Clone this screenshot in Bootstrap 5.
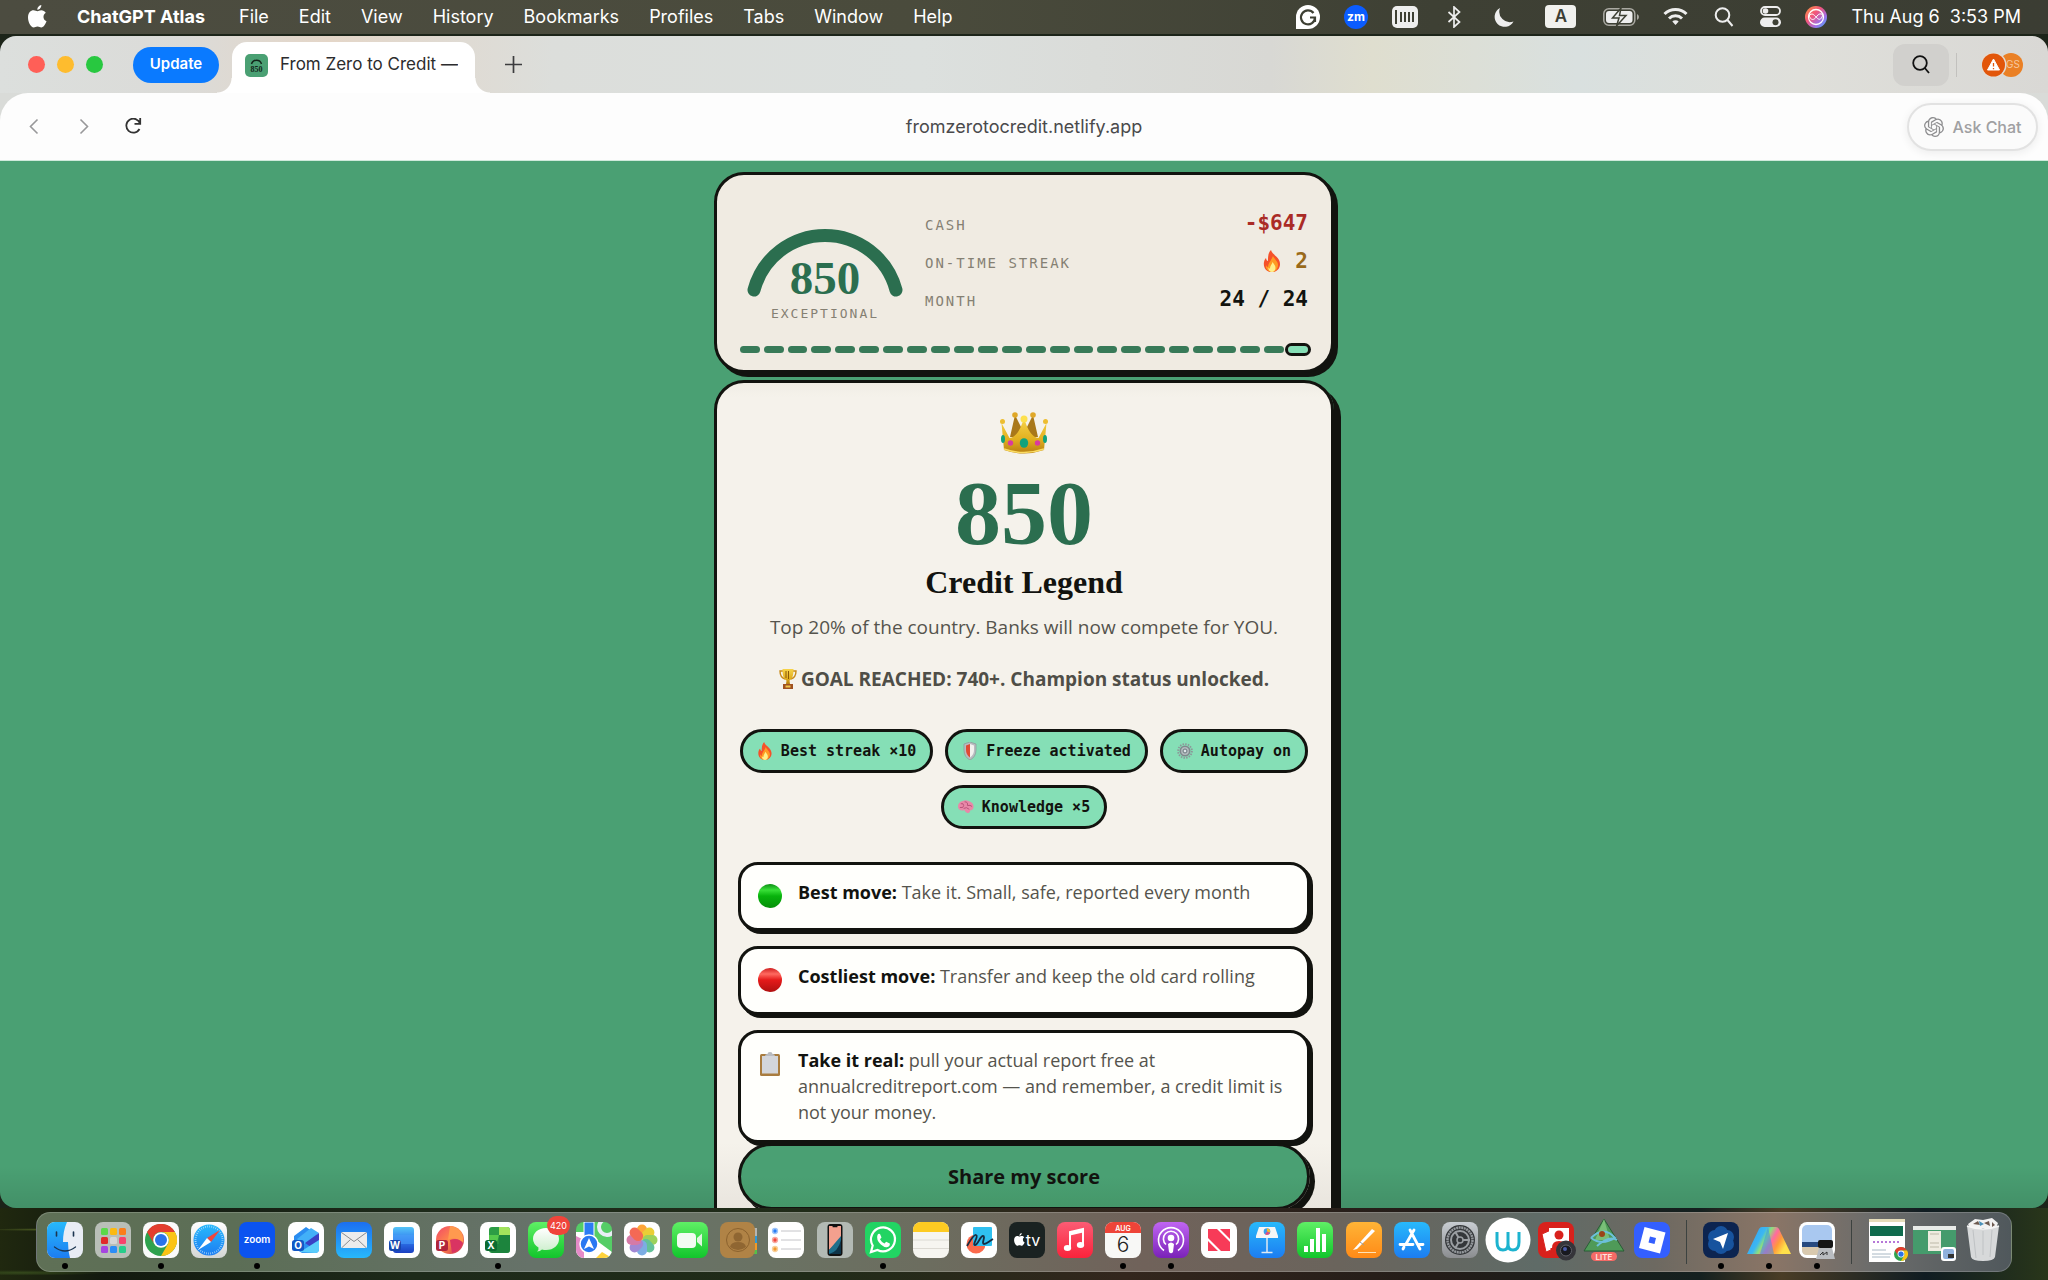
<!DOCTYPE html>
<html lang="en">
<head>
<meta charset="utf-8">
<meta name="viewport" content="width=device-width, initial-scale=1">
<title>From Zero to Credit</title>
<link href="https://cdn.jsdelivr.net/npm/bootstrap@5.3.0/dist/css/bootstrap.min.css" rel="stylesheet">
<style>
:root{--ink:#12130f;--green:#4aa073;--deep:#2b6e4f;--mint:#85dfb6;--ui:Inter,"Liberation Sans",sans-serif;--body:"Open Sans",Lato,sans-serif;--code:"DejaVu Sans Mono","Liberation Mono",monospace;--display:"Liberation Serif",serif}
body{height:100vh;overflow:hidden;font-family:var(--ui);color:var(--ink);background:#1c2419}
svg{display:block;flex:none}
a{color:inherit;text-decoration:none}
/* menu bar */
.menubar{height:34px;padding:0 27px 1px 28px;font-size:18px;color:#fff;background:linear-gradient(90deg,#4c4c40,#4a4b3c 45%,#3e4034 70%,#3b3d33)}
.menubar nav{gap:30px;margin-left:30px}
.tray{gap:24px}
.inputkey{width:31px;height:23px;margin:0 3px;border-radius:4px;background:#f1f1ee;color:#3c3e34;font-size:17px;font-weight:600}
/* browser window */
.browser{margin-top:2px;border-radius:16px;overflow:hidden;min-height:0}
.tabstrip{height:57px;padding:0 25px 0 28px;background:linear-gradient(90deg,#dcdfdd 0,#dbdbd8 9%,#e4d6c8 16%,#dcdedb 27%,#dce0de 45%,#d8d8d4 62%,#dfdecf 67%,#d9e0df 77%,#dfdfda 88%,#d9d8d5)}
.lights{gap:12px;margin-right:30px}
.light{width:17px;height:17px;border-radius:50%}
.update{height:36px;width:86px;border-radius:18px;background:#0a7aff;color:#fff;border:0;font-size:15px;font-weight:600}
.tab{width:243px;height:51px;margin:0 30px 0 13px;border-radius:15px 15px 0 0;background:#fff;padding:0 13px 5px;font-size:17px;color:#2c2c2e;gap:12px;position:relative}
.tab::before,.tab::after{content:"";position:absolute;bottom:0;width:15px;height:15px}
.tab::before{left:-15px;background:radial-gradient(circle at 0 0,transparent 14px,#fff 15px)}
.tab::after{right:-15px;background:radial-gradient(circle at 100% 0,transparent 14px,#fff 15px)}
.favicon{width:23px;height:23px;border-radius:5px;background:var(--green)}
.plainbtn{border:0;background:none;padding:0}
.findbtn{width:56px;height:42px;border-radius:12px;background:#d1d0cd}
.divider{width:1px;height:24px;background:#c2c1be;margin:0 25px 0 7px}
.toolbar{background:#d9dbd8}
.toolface{height:68px;background:#fdfdfd;border-radius:28px 28px 0 0;padding:0 10px;border-bottom:1px solid #cfeadb}
.side{flex:1 1 0}
.navbtns{gap:32px}
.navbtns .plainbtn:first-child{margin-left:17px}
.address{font-size:18px;color:#4a4a4c}
.askchat{width:131px;height:48px;border:2px solid #e2e2e2;border-radius:24px;background:#fbfbfb;color:#a0a0a2;font-size:16px;font-weight:500;gap:9px;box-shadow:0 2px 10px rgba(0,0,0,.07)}
/* page */
.stage{min-height:0;overflow:hidden;background:linear-gradient(rgba(0,0,0,0) 96%,rgba(0,0,0,.1)),var(--green);padding-top:11px}
.stage main{width:620px}
.sheet{border:3px solid var(--ink);border-radius:30px;padding:0 23px}
.status{background:#f0ebe2;box-shadow:4px 4px 0 var(--ink);padding-top:28px;padding-bottom:17px;margin-bottom:7px}
.dial{width:170px;position:relative}
.dial svg{overflow:visible}
.dialnum{position:absolute;left:0;right:0;top:50px;font:700 47px/50px var(--display);color:var(--deep);text-align:center}
.dialcap{font:400 13px/16px var(--code);letter-spacing:2px;color:#858073;text-align:center;margin-top:11px}
.stats{margin:1px 0 0 15px}
.stats dt{font:500 14px/34px var(--code);letter-spacing:2px;color:#858073;padding-top:4px}
.stats dd{font:700 21px/38px var(--code);margin:0;gap:14px}
.months{gap:4px;margin-top:24px}
.months i{flex:1;height:7px;border-radius:4px;background:#387a58}
.months .now{background:var(--mint);outline:3px solid var(--ink)}
.result{background:linear-gradient(#f0ede5,#f5f2eb 14px,#f5f2eb 760px,#e9e5de 826px);box-shadow:7px 7px 0 var(--ink);padding-top:29px;padding-bottom:40px}
.bigscore{font:700 92px/90px var(--display);color:var(--deep);margin:14px 0 0}
.rank{font:700 32px/40px var(--display);margin:4px 0 0}
.blurb{font:400 19px/28px var(--body);color:#55544d;margin:11px 0 0}
.goal{font:700 19px/28px var(--body);color:#4f4e47;margin:24px 0 0;gap:4px}
.chips{gap:12px;margin:36px -2px 0}
.chip{height:44px;border:3px solid var(--ink);border-radius:22px;padding:0 14px;background:var(--mint);font:700 15px/20px var(--code);gap:8px}
.moves{gap:15px;margin:33px -2px 0}
.move{border:3px solid var(--ink);border-radius:20px;background:#fffffc;box-shadow:3px 3px 0 var(--ink);padding:14px 17px 15px 16px;font:400 18px/26px var(--body);color:#55544d;gap:15px;min-height:69px}
.move b{color:var(--ink)}
.move svg{margin-top:4px}
.share{height:67px;margin:0 -2px;width:calc(100% + 4px);border:3px solid var(--ink);border-radius:34px;background:linear-gradient(#4aa073 50%,#459769);box-shadow:5px 5px 0 var(--ink);font:700 20px/28px var(--body);color:var(--ink)}
/* dock */
.desk{height:72px;padding:4px 36px 8px;background:radial-gradient(ellipse at 2% 30%,#4a5a20 0,transparent 2%),radial-gradient(ellipse at 1% 90%,#354a1c 0,transparent 3%),linear-gradient(90deg,#20280f,#12190f 5%,#1d2a1a 20%,#202b18 40%,#33261d 55%,#231c18 70%,#14201f 83%,#4a3d26 87%,#101c22 94%,#29361a)}
.dock{height:60px;border-radius:14px;padding:0 4px;border:1px solid rgba(255,255,255,.18);background:linear-gradient(90deg,#5f7056,#5c6e56 10%,#667269 25%,#6a7263 37%,#6c6d5f 45%,#70625a 56%,#6a645c 66%,#5f6b67 76%,#6d6961 82%,#8a7566 88%,#6b6c6b 93%,#50585c)}
.app{flex:1 1 0;padding-top:9px;position:relative}
.app svg{overflow:visible}
.app.running::after{content:"";width:6px;height:6px;border-radius:50%;background:#000;margin-top:5px}
.rule{width:21px;height:44px;margin-top:7px;background:linear-gradient(#3c4240,#3c4240) center/1px 100% no-repeat}
.count{position:absolute;top:3px;left:25px;min-width:21px;height:19px;padding:0 3px;border-radius:10px;background:#f0443a;color:#fff;font-size:9px;line-height:19px}
</style>
</head>
<body class="d-flex flex-column">
<svg width="0" height="0" class="position-absolute" aria-hidden="true">
<defs>
<linearGradient id="gold" x2="0" y2="1"><stop stop-color="#f7d44a"/><stop offset=".6" stop-color="#e2b020"/><stop offset="1" stop-color="#b77f10"/></linearGradient>
<linearGradient id="skin" x2="0" y2="1"><stop stop-color="#28b9fb"/><stop offset="1" stop-color="#1c7df2"/></linearGradient>
<linearGradient id="sky" x2="0" y2="1"><stop stop-color="#1c6ff0"/><stop offset="1" stop-color="#28b8fb"/></linearGradient>
<linearGradient id="lime" x2="0" y2="1"><stop stop-color="#5ff065"/><stop offset="1" stop-color="#12c52c"/></linearGradient>
<linearGradient id="pink" x2="0" y2="1"><stop stop-color="#fc5c74"/><stop offset="1" stop-color="#fa233b"/></linearGradient>
<linearGradient id="violet" x2="0" y2="1"><stop stop-color="#c065f2"/><stop offset="1" stop-color="#7a22b8"/></linearGradient>
<linearGradient id="amber" x2="0" y2="1"><stop stop-color="#ffb436"/><stop offset="1" stop-color="#ff8a17"/></linearGradient>
<linearGradient id="steel" x2="0" y2="1"><stop stop-color="#c8cdd2"/><stop offset="1" stop-color="#8b8d90"/></linearGradient>
<linearGradient id="paper" x2="0" y2="1"><stop stop-color="#fff"/><stop offset="1" stop-color="#d4d6d4"/></linearGradient>
<linearGradient id="word" x2="0" y2="1"><stop stop-color="#55c5f8"/><stop offset=".5" stop-color="#2f7bf0"/><stop offset="1" stop-color="#1b3fc0"/></linearGradient>
<linearGradient id="sunset" x2="1" y2="1"><stop stop-color="#f0466a"/><stop offset=".5" stop-color="#ff8a48"/><stop offset="1" stop-color="#c62a58"/></linearGradient>
<linearGradient id="prism" y2=".35"><stop stop-color="#2f9bf5"/><stop offset=".4" stop-color="#3cb7f2"/><stop offset=".52" stop-color="#8fe07a"/><stop offset=".66" stop-color="#ff6aa0"/><stop offset=".82" stop-color="#ff9a3a"/><stop offset="1" stop-color="#ffe04a"/></linearGradient>
<linearGradient id="siri" x2="1" y2="1"><stop stop-color="#ff9a3c"/><stop offset=".4" stop-color="#f2557c"/><stop offset=".7" stop-color="#a070e8"/><stop offset="1" stop-color="#38b6ff"/></linearGradient>
<linearGradient id="balloon" x2="0" y2="1"><stop stop-color="#fff"/><stop offset="1" stop-color="#cdeecd"/></linearGradient>
<linearGradient id="greenball" x2="0" y2="1"><stop stop-color="#0c8f14"/><stop offset=".25" stop-color="#39e038"/><stop offset=".5" stop-color="#08b30c"/><stop offset="1" stop-color="#058f08"/></linearGradient>
<linearGradient id="redball" x2="0" y2="1"><stop stop-color="#d02020"/><stop offset=".25" stop-color="#ff6a60"/><stop offset=".5" stop-color="#e51a1a"/><stop offset="1" stop-color="#b01010"/></linearGradient>
<symbol id="flame" viewBox="0 0 18 22"><path d="M8 0c1 4 6 6 8 10 3 6-1 12-7 12S0 17 1 12c.4-2 1-3 2-4 .3 2 1 3 2 3 0-4 0-8 3-11z" fill="#f5512a"/><path d="M10 6c1 3 5 5 5 9s-3 7-6 7-7-3-6-7c.5 1 1 2 2 2 0-4 3-6 5-11z" fill="#ff9b23"/><path d="M9.500 12c1 2 3 3 3 6 0 2-1.500 4-3.500 4s-4-2-3.500-4.500c.5 1 1 1 1.500 1 0-3 2-4 2.500-6.500z" fill="#fff08a"/></symbol>
<symbol id="chrome" viewBox="0 0 32 32"><circle cx="16" cy="16" r="16" fill="#2fa24e"/><path d="M2.100 8A16 16 0 0 1 29.900 8H16a8 8 0 0 0-6.900 12z" fill="#e33e2f"/><path d="M29.900 8A16 16 0 0 1 16 32l6.900-12A8 8 0 0 0 16 8z" fill="#fbc415"/><circle cx="16" cy="16" r="7.800" fill="#fff"/><circle cx="16" cy="16" r="6" fill="#2a73e8"/></symbol>
<symbol id="apple" viewBox="0 0 20 24"><path d="M14 0c.2 2.600-1.800 5-4.200 5C9.600 2.600 11.700.4 14 0zM10 6.500c1 0 2-1 4-1 1.800 0 3.700 1 4.700 2.500-3.600 2.200-3 7.500.8 9-1 2.800-3 6.500-5.500 6.500-1.500 0-2-.9-4-.9s-2.500.9-4 .9C3 23.500 0 18 0 13c0-5 3-7.500 5.800-7.500 1.800 0 3.100 1 4.200 1z"/></symbol>
</defs>
</svg>

<header class="menubar d-flex align-items-center flex-shrink-0">
<svg width="19" height="23" fill="#fff" role="img" aria-label="Apple menu"><use href="#apple"/></svg>
<nav class="d-flex align-items-center" aria-label="Menu bar">
<a href="#" class="fw-bold me-1">ChatGPT Atlas</a><a href="#">File</a><a href="#">Edit</a><a href="#">View</a><a href="#">History</a><a href="#">Bookmarks</a><a href="#">Profiles</a><a href="#">Tabs</a><a href="#">Window</a><a href="#">Help</a>
</nav>
<div class="tray d-flex align-items-center ms-auto">
<svg width="24" height="24" viewBox="0 0 24 24"><path d="M12 0a12 12 0 0 1 0 24H0V12A12 12 0 0 1 12 0z" fill="#fff"/><path d="M17.500 8A7 7 0 1 0 19 12.500h-5m5 0V17" fill="none" stroke="#3e4034" stroke-width="2.200"/></svg>
<svg width="24" height="24" viewBox="0 0 24 24"><circle cx="12" cy="12" r="12" fill="#0b5cff"/><text x="12" y="16" font-size="12" font-weight="700" fill="#fff" text-anchor="middle">zm</text></svg>
<svg width="26" height="22" viewBox="0 0 26 22"><rect width="26" height="22" rx="5" fill="#eee"/><path d="M4 4v14M9 6v10M13 6v10M17 6v10M21 6v10" stroke="#3e4034" stroke-width="2"/></svg>
<svg width="24" height="22" viewBox="0 0 24 22" fill="none" stroke="#eee" stroke-width="1.700"><path d="M6.500 6l11 10-5.500 5V1l5.500 5-11 10"/></svg>
<svg width="28" height="22" viewBox="0 0 28 22"><path d="M10 2A10 10 0 1 0 23.500 15.500 10.500 10.500 0 0 1 10 2z" fill="#eee"/></svg>
<span class="inputkey d-flex align-items-center justify-content-center">A</span>
<svg width="36" height="18" viewBox="0 0 36 18"><rect x=".8" y=".8" width="31" height="16.400" rx="5" fill="none" stroke="#aaa9a2" stroke-width="1.500"/><rect x="3" y="3" width="26.500" height="12" rx="3" fill="#eee"/><path d="M34 6v6q2-1 2-3t-2-3z" fill="#aaa9a2"/><path d="M18 0L9.500 10H16l-2.500 8L23 7.500h-6.500z" fill="#eee" stroke="#3e4034" stroke-width="1.500"/></svg>
<svg width="25" height="19" viewBox="0 0 25 19" fill="none" stroke="#eee" stroke-width="3"><path d="M1.500 7a15.500 15.500 0 0 1 22 0M6 11.500a9.300 9.300 0 0 1 13 0"/><path d="M12.500 18l-3.200-3.500a4.600 4.600 0 0 1 6.400 0z" fill="#eee" stroke="none"/></svg>
<svg width="24" height="20" viewBox="-2 0 24 20" fill="none" stroke="#eee" stroke-width="2"><circle cx="8.500" cy="8" r="6.800"/><path d="M13.500 13l5 6"/></svg>
<svg width="21" height="21" viewBox="0 0 21 21"><rect x="1" y="1" width="19" height="8" rx="4" fill="none" stroke="#eee" stroke-width="1.800"/><circle cx="5.500" cy="5" r="2.800" fill="#eee"/><rect y="11.500" width="21" height="9.500" rx="4.700" fill="#eee"/><circle cx="15.500" cy="16.200" r="3" fill="#3e4034"/></svg>
<svg width="22" height="22" viewBox="0 0 22 22"><circle cx="11" cy="11" r="11" fill="url(#siri)"/><circle cx="11" cy="11" r="7.500" fill="none" stroke="#fff" stroke-width="1.300"/><path d="M4 10c3-4 5-1 7 1s4 4 6 0-3-4-5-1-5 6-8 0z" fill="none" stroke="#fff"/></svg>
<time>Thu Aug 6&nbsp; 3:53 PM</time>
</div>
</header>

<section class="browser d-flex flex-column flex-grow-1">
<div class="tabstrip d-flex align-items-center flex-shrink-0">
<div class="lights d-flex"><span class="light" style="background:#ff5f57"></span><span class="light" style="background:#febc2e"></span><span class="light" style="background:#28c840"></span></div>
<button class="update">Update</button>
<a href="#" class="tab d-flex align-items-center align-self-end flex-shrink-0"><svg class="favicon" viewBox="0 0 23 23"><path d="M6.500 10a5.200 5.200 0 0 1 10 0" fill="none" stroke="#12251a" stroke-width="1.500"/><text x="11.500" y="17.500" text-anchor="middle" font-size="8" font-weight="700" font-family="Liberation Serif,serif" fill="#12251a">850</text></svg><span class="text-nowrap overflow-hidden">From Zero to Credit —</span></a>
<button class="plainbtn" aria-label="New tab"><svg width="17" height="17" viewBox="0 0 17 17" stroke="#3c3c3e" stroke-width="1.700"><path d="M8.500 0v17M0 8.500h17"/></svg></button>
<button class="plainbtn findbtn ms-auto d-flex align-items-center justify-content-center" aria-label="Search tabs"><svg width="18" height="19" viewBox="0 0 18 19" fill="none" stroke="#111" stroke-width="1.800"><circle cx="8" cy="8" r="6.800"/><path d="M12.800 13l4.200 5"/></svg></button>
<span class="divider"></span>
<svg width="41" height="24" viewBox="0 0 41 24"><circle cx="29" cy="12" r="12" fill="#ea8025"/><text x="31" y="15" font-size="10" fill="#f6c79d" text-anchor="middle">GS</text><circle cx="11.500" cy="12" r="13" fill="#e3dbd2"/><circle cx="11.500" cy="12" r="11.500" fill="#e2560a"/><path d="M11.500 6l6 11h-12z" fill="#fff" stroke="#fff" stroke-linejoin="round"/><path d="M11.500 10v3.500M11.500 15v1.200" stroke="#e2560a" stroke-width="1.300"/></svg>
</div>
<div class="toolbar flex-shrink-0"><div class="toolface d-flex align-items-center">
<div class="side navbtns d-flex align-items-center">
<button class="plainbtn" aria-label="Back"><svg width="17" height="17" viewBox="0 0 17 17" fill="none" stroke="#98989a" stroke-width="1.600"><path d="M10.500 1.500L3.500 8.500l7 7"/></svg></button>
<button class="plainbtn" aria-label="Forward"><svg width="17" height="17" viewBox="0 0 17 17" fill="none" stroke="#98989a" stroke-width="1.600"><path d="M4.500 1.500l7 7-7 7"/></svg></button>
<button class="plainbtn" aria-label="Reload"><svg width="17" height="17" viewBox="0 0 17 17" fill="none" stroke="#333" stroke-width="1.800"><path d="M14.500 11A7 7 0 1 1 15 5.500M15.200 0v5.800H9.500"/></svg></button>
</div>
<a href="#" class="address">fromzerotocredit.netlify.app</a>
<div class="side d-flex justify-content-end">
<button class="askchat d-flex align-items-center justify-content-center p-0"><svg width="20" height="20" viewBox="0 0 24 24" fill="#8e8e90"><path d="M22.2819 9.8211a5.9847 5.9847 0 0 0-.5157-4.9108 6.0462 6.0462 0 0 0-6.5098-2.9A6.0651 6.0651 0 0 0 4.9807 4.1818a5.9847 5.9847 0 0 0-3.9977 2.9 6.0462 6.0462 0 0 0 .7427 7.0966 5.98 5.98 0 0 0 .511 4.9107 6.051 6.051 0 0 0 6.5146 2.9001A5.9847 5.9847 0 0 0 13.2599 24a6.0557 6.0557 0 0 0 5.7718-4.2058 5.9894 5.9894 0 0 0 3.9977-2.9001 6.0557 6.0557 0 0 0-.7475-7.0729zm-9.022 12.6081a4.4755 4.4755 0 0 1-2.8764-1.0408l.1419-.0804 4.7783-2.7582a.7948.7948 0 0 0 .3927-.6813v-6.7369l2.02 1.1686a.071.071 0 0 1 .038.052v5.5826a4.504 4.504 0 0 1-4.4945 4.4944zm-9.6607-4.1254a4.4708 4.4708 0 0 1-.5346-3.0137l.142.0852 4.783 2.7582a.7712.7712 0 0 0 .7806 0l5.8428-3.3685v2.3324a.0804.0804 0 0 1-.0332.0615L9.74 19.9502a4.4992 4.4992 0 0 1-6.1408-1.6464zM2.3408 7.8956a4.485 4.485 0 0 1 2.3655-1.9728V11.6a.7664.7664 0 0 0 .3879.6765l5.8144 3.3543-2.0201 1.1685a.0757.0757 0 0 1-.071 0l-4.8303-2.7865A4.504 4.504 0 0 1 2.3408 7.872zm16.5963 3.8558L13.1038 8.364 15.1192 7.2a.0757.0757 0 0 1 .071 0l4.8303 2.7913a4.4944 4.4944 0 0 1-.6765 8.1042v-5.6772a.79.79 0 0 0-.407-.667zm2.0107-3.0231l-.142-.0852-4.7735-2.7818a.7759.7759 0 0 0-.7854 0L9.409 9.2297V6.8974a.0662.0662 0 0 1 .0284-.0615l4.8303-2.7866a4.4992 4.4992 0 0 1 6.6802 4.66zM8.3065 12.863l-2.02-1.1638a.0804.0804 0 0 1-.038-.0567V6.0742a4.4992 4.4992 0 0 1 7.3757-3.4537l-.142.0805L8.704 5.459a.7948.7948 0 0 0-.3927.6813zm1.0976-2.3654l2.602-1.4998 2.6069 1.4998v2.9994l-2.5974 1.4997-2.6067-1.4997Z"/></svg>Ask Chat</button>
</div>
</div></div>

<div class="stage flex-grow-1">
<main class="mx-auto">
<section class="sheet status">
<div class="d-flex">
<div class="dial flex-shrink-0">
<svg width="170" height="92" viewBox="0 0 170 92"><path d="M14 87A73.500 73.500 0 0 1 156 87" fill="none" stroke="#2b6e4f" stroke-width="13" stroke-linecap="round"/></svg>
<div class="dialnum">850</div>
<div class="dialcap">EXCEPTIONAL</div>
</div>
<dl class="stats flex-grow-1">
<div class="d-flex justify-content-between"><dt>CASH</dt><dd style="color:#aa2b26">-$647</dd></div>
<div class="d-flex justify-content-between"><dt>ON-TIME STREAK</dt><dd class="d-flex align-items-center" style="color:#9a6a1a"><svg width="18" height="22"><use href="#flame"/></svg>2</dd></div>
<div class="d-flex justify-content-between"><dt>MONTH</dt><dd>24 / 24</dd></div>
</dl>
</div>
<div class="months d-flex"><i></i><i></i><i></i><i></i><i></i><i></i><i></i><i></i><i></i><i></i><i></i><i></i><i></i><i></i><i></i><i></i><i></i><i></i><i></i><i></i><i></i><i></i><i></i><i class="now"></i></div>
</section>

<section class="sheet result text-center">
<svg class="mx-auto" width="48" height="42" viewBox="0 0 48 42"><path d="M10 25L15 3l9 18 9-18 5 22z" fill="#a9781a"/><path d="M1.500 11L4 38q20 7 40 0l2.500-27-8 15q-9-1-14.500-20-5.500 19-14.500 20z" fill="url(#gold)"/><circle cx="15" cy="3" r="2.800" fill="#e0a828"/><circle cx="33" cy="3" r="2.800" fill="#e0a828"/><circle cx="24" cy="7" r="3.500" fill="#fde04c"/><circle cx="2.500" cy="9.500" r="2.500" fill="#edbd30"/><circle cx="45.500" cy="9.500" r="2.500" fill="#edbd30"/><ellipse cx="24" cy="31" rx="4.200" ry="4.800" fill="#12a27c"/><circle cx="10.500" cy="31" r="2.700" fill="#d93aa0"/><circle cx="37.500" cy="31" r="2.700" fill="#d93aa0"/><ellipse cx="3" cy="27" rx="2" ry="4" fill="#12a27c"/><ellipse cx="45" cy="27" rx="2" ry="4" fill="#12a27c"/><path d="M4 37q20 7 40 0" fill="none" stroke="#fbdc62" stroke-width="1.500"/></svg>
<div class="bigscore">850</div>
<h1 class="rank">Credit Legend</h1>
<p class="blurb">Top 20% of the country. Banks will now compete for YOU.</p>
<p class="goal d-flex align-items-center justify-content-center"><svg width="18" height="20" viewBox="0 0 18 20"><path d="M4 2H1c0 5 2 7 5 8M14 2h3c0 5-2 7-5 8" fill="none" stroke="#c98a18" stroke-width="1.400"/><path d="M3.500 0h11c0 6-1 10-4 11.500L11 15H7l.5-3.500C4.500 10 3.500 6 3.500 0z" fill="url(#gold)"/><path d="M7 2v7M9.500 2v8" stroke="#8a5708"/><path d="M4 15h10v5H4z" fill="#a05220"/><path d="M6.500 16.500h5v2h-5z" fill="#f1c64a"/></svg><span>GOAL REACHED: 740+. Champion status unlocked.</span></p>

<div class="chips d-flex flex-wrap justify-content-center">
<span class="chip d-flex align-items-center"><svg width="16" height="18"><use href="#flame"/></svg>Best streak ×10</span>
<span class="chip d-flex align-items-center"><svg width="16" height="18" viewBox="1 0 16 18"><path d="M9 0l6 2v6q0 7-6 10Q3 15 3 8V2z" fill="#b9bcc0" stroke="#898d92" stroke-width=".6"/><path d="M9 2L5 3.500V8q0 5 4 7.500z" fill="#e04a34"/><path d="M9 2l4 1.500V8q0 5-4 7.500z" fill="#f3f1ee"/></svg>Freeze activated</span>
<span class="chip d-flex align-items-center"><svg width="16" height="16" viewBox="0 0 18 18" fill="none"><circle cx="9" cy="9" r="7.800" stroke="#8d9699" stroke-width="2" stroke-dasharray="1.700 1.360"/><circle cx="9" cy="9" r="5.300" fill="#b2babd" stroke="#7f888c" stroke-width="1.800"/><circle cx="9" cy="9" r="2.200" fill="#dfe6e8" stroke="#5e6c72"/></svg>Autopay on</span>
<span class="chip d-flex align-items-center"><svg width="16" height="16" viewBox="1 1 17 17"><path d="M1 9q0-5 5-6 4-2 8 1 4 2 3.500 6-.5 3-3.500 3 0 3-3 3-2 0-3-3Q1 14 1 9z" fill="#e888a8"/><path d="M4 6q3-1 3 2t-4 2M8 4q4 0 3 4M11 8q3-1 5 1M7 11q3-2 6 1" stroke="#b84f78" fill="none"/></svg>Knowledge ×5</span>
</div>

<div class="moves d-flex flex-column text-start">
<div class="move d-flex"><svg width="26" height="26" viewBox="0 0 26 26"><circle cx="13" cy="13" r="12" fill="url(#greenball)"/></svg><div><b>Best move:</b> Take it. Small, safe, reported every month</div></div>
<div class="move d-flex"><svg width="26" height="26" viewBox="0 0 26 26"><circle cx="13" cy="13" r="12" fill="url(#redball)"/></svg><div><b>Costliest move:</b> Transfer and keep the old card rolling</div></div>
<div class="move d-flex"><svg width="26" height="26" viewBox="0 0 26 26"><rect x="3" y="3" width="20" height="22" rx="1.500" fill="#a97c3f"/><rect x="5" y="5" width="16" height="17.500" fill="#d3d5da"/><path d="M8 5q0-2 2.500-2 0-2 2.500-2t2.500 2Q18 3 18 5z" fill="#b9bbc0"/></svg><div><b>Take it real:</b> pull your actual report free at annualcreditreport.com — and remember, a credit limit is not your money.</div></div>
</div>
<button class="share">Share my score</button>
</section>
</main>
</div>
</section>

<footer class="desk flex-shrink-0">
<div class="dock d-flex text-center">
<a href="#" class="app running d-flex flex-column align-items-center" aria-label="Finder"><svg width="36" height="36" viewBox="0 0 36 36"><rect width="36" height="36" rx="8" fill="#e9edf5"/><path d="M8 0h12q-4 9-4 20h5q0 9 2 16H8a8 8 0 0 1-8-8V8a8 8 0 0 1 8-8z" fill="url(#skin)"/><path d="M9.500 10v4M26.500 10v4" stroke="#1c3550" stroke-width="1.600" stroke-linecap="round"/><path d="M7.500 25q10.500 8 21 0" fill="none" stroke="#1c3550" stroke-width="1.300" stroke-linecap="round"/></svg></a>
<a href="#" class="app d-flex flex-column align-items-center" aria-label="Launchpad"><svg width="36" height="36" viewBox="0 0 36 36"><rect width="36" height="36" rx="8" fill="#b9bfb8"/><g><rect x="6" y="6" width="7" height="7" rx="1.500" fill="#5ad84a"/><rect x="15" y="6" width="7" height="7" rx="1.500" fill="#fcb912"/><rect x="24" y="6" width="7" height="7" rx="1.500" fill="#fb7e1b"/><rect x="6" y="15" width="7" height="7" rx="1.500" fill="#e02a2a"/><rect x="15" y="15" width="7" height="7" rx="1.500" fill="#d6d6d6"/><rect x="24" y="15" width="7" height="7" rx="1.500" fill="#f8426d"/><rect x="6" y="24" width="7" height="7" rx="1.500" fill="#a645e0"/><rect x="15" y="24" width="7" height="7" rx="1.500" fill="#2c8df6"/><rect x="24" y="24" width="7" height="7" rx="1.500" fill="#27cd8b"/></g></svg></a>
<a href="#" class="app running d-flex flex-column align-items-center" aria-label="Chrome"><svg width="36" height="36" viewBox="0 0 36 36"><rect width="36" height="36" rx="8" fill="#fafafa"/><use href="#chrome" x="2" y="2" width="32" height="32"/></svg></a>
<a href="#" class="app d-flex flex-column align-items-center" aria-label="Safari"><svg width="36" height="36" viewBox="0 0 36 36"><rect width="36" height="36" rx="8" fill="url(#paper)"/><circle cx="18" cy="18" r="15.500" fill="url(#skin)"/><circle cx="18" cy="18" r="13.500" fill="none" stroke="#bfe4ff" stroke-width="2" stroke-dasharray=".6 1.520"/><path d="M29 8L16 16l4 4z" fill="#f0463c"/><path d="M7 28l9-12 4 4z" fill="#fff"/></svg></a>
<a href="#" class="app running d-flex flex-column align-items-center" aria-label="Zoom"><svg width="36" height="36" viewBox="0 0 36 36"><rect width="36" height="36" rx="8" fill="#0b53f0"/><text x="18" y="21" text-anchor="middle" font-size="10" font-weight="600" fill="#fff">zoom</text></svg></a>
<a href="#" class="app d-flex flex-column align-items-center" aria-label="Outlook"><svg width="36" height="36" viewBox="0 0 36 36"><rect width="36" height="36" rx="8" fill="#fff"/><path d="M6 14L18 5l13 9v13a4 4 0 0 1-4 4H14L6 26z" fill="#2b8df0"/><path d="M9 17L23 6l8 5-16 12z" fill="#42b0f8"/><path d="M17 21l14-10v8l-8 6z" fill="#3b41c5"/><path d="M12 30l19-12v9a4 4 0 0 1-4 4z" fill="#5bcdfb"/><rect x="4" y="18" width="12" height="11" rx="2.500" fill="#1257c5"/><text x="10" y="27" text-anchor="middle" font-size="10" font-weight="700" fill="#fff">O</text></svg></a>
<a href="#" class="app d-flex flex-column align-items-center" aria-label="Mail"><svg width="36" height="36" viewBox="0 0 36 36"><rect width="36" height="36" rx="8" fill="url(#sky)"/><rect x="5" y="10" width="26" height="16" rx="1.500" fill="#ececec"/><path d="M5.500 10.500l12.500 9 12.500-9M6 25.500l8.500-8M30 25.500l-8.500-8" fill="none" stroke="#8a8d90"/></svg></a>
<a href="#" class="app d-flex flex-column align-items-center" aria-label="Word"><svg width="36" height="36" viewBox="0 0 36 36"><rect width="36" height="36" rx="8" fill="#fff"/><rect x="9" y="5" width="21" height="26" rx="3" fill="url(#word)"/><path d="M9 13h21v9H13q-4 0-4 4z" fill="#4a9cf8" opacity=".6"/><rect x="5" y="18" width="12" height="11" rx="2.500" fill="#1746ad"/><text x="11" y="27" text-anchor="middle" font-size="10" font-weight="700" fill="#fff">W</text></svg></a>
<a href="#" class="app d-flex flex-column align-items-center" aria-label="PowerPoint"><svg width="36" height="36" viewBox="0 0 36 36"><rect width="36" height="36" rx="8" fill="#fff"/><circle cx="18" cy="18" r="14" fill="url(#sunset)"/><path d="M18 4a14 14 0 0 1 13 17q-8-7-15-3z" fill="#ff9a4f"/><path d="M18 18q8-3 13 3-3 8-11 10z" fill="#d93462"/><rect x="4" y="18" width="12" height="11" rx="2.500" fill="#b0243c"/><text x="10" y="27" text-anchor="middle" font-size="10" font-weight="700" fill="#fff">P</text></svg></a>
<a href="#" class="app running d-flex flex-column align-items-center" aria-label="Excel"><svg width="36" height="36" viewBox="0 0 36 36"><rect width="36" height="36" rx="8" fill="#fff"/><path d="M9 8q0-3 3-3h15q3 0 3 3v20q0 3-3 3H12q-3 0-3-3z" fill="#2c9d45"/><path d="M19 5h8q3 0 3 3v5H19z" fill="#a2e35c"/><path d="M9 13h10v9H9z" fill="#55c94c"/><path d="M19 13q-2 12-10 15l3 3h15q3 0 3-3V13z" fill="#16793a" opacity=".7"/><rect x="5" y="18" width="12" height="11" rx="2.500" fill="#0c6b31"/><text x="11" y="27" text-anchor="middle" font-size="10" font-weight="700" fill="#fff">X</text></svg></a>
<a href="#" class="app d-flex flex-column align-items-center" aria-label="Messages"><svg width="36" height="36" viewBox="0 0 36 36"><rect width="36" height="36" rx="8" fill="url(#lime)"/><path d="M18 6c8 0 13 5 13 11s-5 11-13 11q-2 0-4-.5-2 2-5 2 2-2 1.500-4Q5 22 5 17C5 11 10 6 18 6z" fill="url(#balloon)"/></svg><span class="count">420</span></a>
<a href="#" class="app d-flex flex-column align-items-center" aria-label="Maps"><svg width="36" height="36" viewBox="0 0 36 36"><clipPath id="tile"><rect width="36" height="36" rx="8"/></clipPath><g clip-path="url(#tile)"><rect width="36" height="36" fill="#55cd66"/><path d="M0 10h9l27 20v6H0z" fill="#fff"/><path d="M0 14l8 4v18H0z" fill="#e58bc8"/><path d="M20 36l6-6 10 6z" fill="#ffd23c"/><circle cx="31" cy="5" r="8" fill="none" stroke="#e8eef5" stroke-width="4"/><path d="M8 0h10v16H8z" fill="#2c7cf4" stroke="#fff"/></g><circle cx="13" cy="22" r="9" fill="#2a78f2" stroke="#fff" stroke-width="1.500"/><path d="M13 16l5 11-5-2.500L8 27z" fill="#fff"/></svg></a>
<a href="#" class="app d-flex flex-column align-items-center" aria-label="Photos"><svg width="36" height="36" viewBox="0 0 36 36"><rect width="36" height="36" rx="8" fill="#fff"/><g opacity=".88"><rect x="13" y="2.500" width="10" height="15" rx="5" fill="#ff9a1e"/><rect x="13" y="2.500" width="10" height="15" rx="5" fill="#e8c81b" transform="rotate(45 18 18)"/><rect x="13" y="2.500" width="10" height="15" rx="5" fill="#8fcb45" transform="rotate(90 18 18)"/><rect x="13" y="2.500" width="10" height="15" rx="5" fill="#4fb98b" transform="rotate(135 18 18)"/><rect x="13" y="2.500" width="10" height="15" rx="5" fill="#6aa2e0" transform="rotate(180 18 18)"/><rect x="13" y="2.500" width="10" height="15" rx="5" fill="#9578cf" transform="rotate(225 18 18)"/><rect x="13" y="2.500" width="10" height="15" rx="5" fill="#d0689c" transform="rotate(270 18 18)"/><rect x="13" y="2.500" width="10" height="15" rx="5" fill="#f3553e" transform="rotate(315 18 18)"/></g></svg></a>
<a href="#" class="app d-flex flex-column align-items-center" aria-label="FaceTime"><svg width="36" height="36" viewBox="0 0 36 36"><rect width="36" height="36" rx="8" fill="url(#lime)"/><rect x="5" y="11" width="19" height="15" rx="4" fill="#f2fbf2"/><path d="M25 16l5-4.500v13L25 20z" fill="#e0f5e0"/></svg></a>
<a href="#" class="app d-flex flex-column align-items-center" aria-label="Contacts"><svg width="36" height="36" viewBox="0 0 36 36"><rect x="6" y="6" width="31" height="8" fill="#b5b5b0"/><rect x="6" y="14" width="31" height="7" fill="#2e9ad8"/><rect x="6" y="21" width="31" height="7" fill="#f39a25"/><rect x="6" y="28" width="31" height="4" fill="#55c048"/><rect width="35" height="36" rx="8" fill="#b08346"/><g fill="none" stroke="#8b622e"><circle cx="18" cy="18" r="11.500"/></g><circle cx="18" cy="15" r="4.500" fill="#8f6632"/><path d="M10 25q1-5 8-5t8 5q-8 6-16 0z" fill="#8f6632"/></svg></a>
<a href="#" class="app d-flex flex-column align-items-center" aria-label="Reminders"><svg width="36" height="36" viewBox="0 0 36 36"><rect width="36" height="36" rx="8" fill="#fff"/><path d="M13 9h20M13 18h20M13 27h20" stroke="#c4c4c8"/><circle cx="7" cy="9" r="2.400" fill="#2a7df4" stroke="#9cc4fa" stroke-width="1.500"/><circle cx="7" cy="18" r="2.400" fill="#f0483c" stroke="#f8a8a0" stroke-width="1.500"/><circle cx="7" cy="27" r="2.400" fill="#f29a2e" stroke="#f8cf9a" stroke-width="1.500"/></svg></a>
<a href="#" class="app d-flex flex-column align-items-center" aria-label="iPhone Mirroring"><svg width="36" height="36" viewBox="0 0 36 36"><rect width="36" height="36" rx="8" fill="#b3bab4"/><rect x="10.500" y="2" width="15" height="32" rx="3" fill="#111"/><path d="M12 4h12v14L12 28z" fill="#f3a08e"/><path d="M12 28L24 14v18H12z" fill="#1e6f8c"/><path d="M12 32q9-2 12-14v14z" fill="#0e3448"/><rect x="15.500" y="3.500" width="5" height="1.800" rx=".9" fill="#111"/></svg></a>
<a href="#" class="app running d-flex flex-column align-items-center" aria-label="WhatsApp"><svg width="36" height="36" viewBox="0 0 36 36"><rect width="36" height="36" rx="8" fill="#22d463"/><path d="M6 30l1.700-6.500A12 12 0 1 1 12.500 28z" fill="none" stroke="#fff" stroke-width="2.200"/><path d="M12.500 13q1-2 2.500-1l1.500 3.500-1.500 1.800q1.500 3 4.500 4.300l1.700-1.800 3.600 1.700q.5 3-3 3.800-2.500.3-6-2.700-5-5-3.300-9.600z" fill="#fff"/></svg></a>
<a href="#" class="app d-flex flex-column align-items-center" aria-label="Notes"><svg width="36" height="36" viewBox="0 0 36 36"><rect width="36" height="36" rx="8" fill="#f6f5f0"/><path d="M8 0h20a8 8 0 0 1 8 8v2H0V8a8 8 0 0 1 8-8z" fill="#fdcb22"/><path d="M0 18h36M0 26.500h36" stroke="#d5d3cc" stroke-width=".8"/></svg></a>
<a href="#" class="app d-flex flex-column align-items-center" aria-label="Freeform"><svg width="36" height="36" viewBox="0 0 36 36"><rect width="36" height="36" rx="8" fill="#fff"/><circle cx="15" cy="22" r="9.500" fill="#fb6a4c"/><rect x="12" y="5" width="19" height="19" rx="1" fill="#2fc0f0"/><path d="M6 24q7-12 9-11c3 1-4 10-1 10s5-9 8-9-2 8 1 8 4-2 9-5" fill="none" stroke="#172d42" stroke-width="1.800"/></svg></a>
<a href="#" class="app d-flex flex-column align-items-center" aria-label="TV"><svg width="36" height="36" viewBox="0 0 36 36"><rect width="36" height="36" rx="8" fill="#1a2221"/><use href="#apple" x="5" y="11" width="11" height="13" fill="#fff"/><text x="24" y="24" text-anchor="middle" font-size="16" fill="#fff">tv</text></svg></a>
<a href="#" class="app d-flex flex-column align-items-center" aria-label="Music"><svg width="36" height="36" viewBox="0 0 36 36"><rect width="36" height="36" rx="8" fill="url(#pink)"/><path d="M13 25V10l13-3v15" fill="none" stroke="#fff" stroke-width="2"/><path d="M13 10l13-3v3.500L13 13.500z" fill="#fff"/><ellipse cx="10.500" cy="26" rx="3.700" ry="3" fill="#fff"/><ellipse cx="23.500" cy="23" rx="3.700" ry="3" fill="#fff"/></svg></a>
<a href="#" class="app running d-flex flex-column align-items-center" aria-label="Calendar"><svg width="36" height="36" viewBox="0 0 36 36"><rect width="36" height="36" rx="8" fill="#f8f8f6"/><path d="M8 0h20a8 8 0 0 1 8 8v3H0V8a8 8 0 0 1 8-8z" fill="#ee4438"/><text x="18" y="9" text-anchor="middle" font-size="7" font-weight="600" fill="#fff">AUG</text><text x="18" y="30" text-anchor="middle" font-size="21" font-weight="300" fill="#222">6</text></svg></a>
<a href="#" class="app running d-flex flex-column align-items-center" aria-label="Podcasts"><svg width="36" height="36" viewBox="0 0 36 36"><rect width="36" height="36" rx="8" fill="url(#violet)"/><path d="M11 28.500a12.500 12.500 0 1 1 14 0M13 22.500a7.600 7.600 0 1 1 10 0" fill="none" stroke="#fff" stroke-width="1.600"/><circle cx="18" cy="16" r="3.300" fill="#fff"/><path d="M15 22q3-3 6 0l-1 8q-2 2.500-4 0z" fill="#fff"/></svg></a>
<a href="#" class="app d-flex flex-column align-items-center" aria-label="News"><svg width="36" height="36" viewBox="0 0 36 36"><rect width="36" height="36" rx="8" fill="#fff"/><path d="M7 7h9l13 13v9h-9L7 16z" fill="#f73b58"/><path d="M19 7h10v10zM7 19v10h10z" fill="#f73b58"/></svg></a>
<a href="#" class="app d-flex flex-column align-items-center" aria-label="Keynote"><svg width="36" height="36" viewBox="0 0 36 36"><rect width="36" height="36" rx="8" fill="url(#skin)"/><path d="M10 5h16l3 9v2H7v-2z" fill="#f6f6f6"/><circle cx="18" cy="9.500" r="3.300" fill="#39a0ee"/><path d="M18 9.500V6.200a3.300 3.300 0 0 1 3 4.300z" fill="#f5b829"/><path d="M18 9.500l3 1.500a3.300 3.300 0 0 1-5 1.300z" fill="#e24d80"/><path d="M18 16v14M12.500 30.500h11" stroke="#dfe9f4" stroke-width="1.500"/></svg></a>
<a href="#" class="app d-flex flex-column align-items-center" aria-label="Numbers"><svg width="36" height="36" viewBox="0 0 36 36"><rect width="36" height="36" rx="8" fill="url(#lime)"/><path d="M7 24h4v6H7zM13 17h4v13h-4zM19 6h4v24h-4zM25 12h4v18h-4z" fill="#fff"/></svg></a>
<a href="#" class="app d-flex flex-column align-items-center" aria-label="Pages"><svg width="36" height="36" viewBox="0 0 36 36"><rect width="36" height="36" rx="8" fill="url(#amber)"/><path d="M7 28L26 7l3 2-18 18z" fill="#fff"/><path d="M14 20l4 3" stroke="#9a9a9a"/><path d="M12 30.500h18" stroke="#ffe2b5"/></svg></a>
<a href="#" class="app d-flex flex-column align-items-center" aria-label="App Store"><svg width="36" height="36" viewBox="0 0 36 36"><rect width="36" height="36" rx="8" fill="url(#skin)"/><g stroke="#fff" stroke-width="2.800" stroke-linecap="round"><path d="M16 8l10 19M20 8l-8 14M6 22.500h13M25 22.500h4M10 25l-1 2"/></g></svg></a>
<a href="#" class="app d-flex flex-column align-items-center" aria-label="System Settings"><svg width="36" height="36" viewBox="0 0 36 36"><rect width="36" height="36" rx="8" fill="url(#steel)"/><circle cx="18" cy="18" r="15" fill="#34373a"/><circle cx="18" cy="18" r="12.500" fill="#34373a" stroke="#94989c" stroke-width="2.500" stroke-dasharray="2 .6"/><circle cx="18" cy="18" r="9" fill="none" stroke="#9a9ea2" stroke-width="2"/><path d="M18 18h10M18 18l-5-8.500M18 18l-5 8.500" stroke="#9a9ea2" stroke-width="2"/><circle cx="18" cy="18" r="3" fill="#34373a" stroke="#9a9ea2" stroke-width="1.500"/></svg></a>
<a href="#" class="app d-flex flex-column align-items-center" aria-label="W"><svg width="36" height="36" viewBox="0 0 36 36"><circle cx="18" cy="18" r="22.500" fill="#fff"/><path d="M7 10v10q0 8 6 8 5 0 5-6V10v12q0 6 5 6 6 0 6-8V10" fill="none" stroke="#1db3cf" stroke-width="3"/></svg></a>
<a href="#" class="app d-flex flex-column align-items-center" aria-label="Photo Booth"><svg width="36" height="36" viewBox="0 0 36 36"><rect width="36" height="36" rx="8" fill="#d8211c"/><path d="M4 12l9-4v20l-5 2z" fill="#fff" stroke="#d8211c"/><rect x="11" y="6" width="20" height="20" fill="#fff"/><circle cx="21" cy="13" r="4.500" fill="#d8211c"/><path d="M14 26q0-7 7-7t7 7z" fill="#d8211c"/><circle cx="28" cy="28.500" r="10" fill="#35353a"/><circle cx="28" cy="28.500" r="5.500" fill="#18191f" stroke="#5f6068"/><circle cx="27" cy="27" r="2" fill="#4b5ca8"/></svg></a>
<a href="#" class="app d-flex flex-column align-items-center" aria-label="Pyramid Lite"><svg width="36" height="36" viewBox="0 0 36 36"><path d="M18-3l20 32H-2z" fill="#4f9a58" stroke="#295c35"/><path d="M18-3l6 21H9z" fill="#8ccf84" opacity=".7"/><path d="M5 16q13-13 24 0-13 8-24 0M31 18q-8-5-20 6" fill="none" stroke="#6cc0da" stroke-width="2"/><circle cx="16" cy="12" r="3" fill="#9a4518"/><rect x="5" y="30" width="26" height="9" rx="4.500" fill="#f46a66"/><text x="18" y="37.500" text-anchor="middle" font-size="8" font-weight="600" fill="#ffe4e0">LITE</text></svg></a>
<a href="#" class="app d-flex flex-column align-items-center" aria-label="Roblox"><svg width="36" height="36" viewBox="0 0 36 36"><rect width="36" height="36" rx="8" fill="#335fff"/><path d="M10.500 5l21 5.500-5.500 21L5 26z" fill="#fff"/><path d="M16 14.500l6 1.500-1.500 6-6-1.500z" fill="#335fff"/></svg></a>
<span class="rule flex-shrink-0"></span>
<a href="#" class="app running d-flex flex-column align-items-center" aria-label="Atlas"><svg width="36" height="36" viewBox="0 0 36 36"><rect width="36" height="36" rx="8" fill="#0c2450"/><g fill="#17539e"><circle cx="18" cy="11" r="7"/><circle cx="24" cy="15" r="7"/><circle cx="24" cy="22" r="7"/><circle cx="18" cy="25" r="7"/><circle cx="12" cy="22" r="7"/><circle cx="12" cy="15" r="7"/></g><path d="M25 11l-5 16-3-7-7-3z" fill="#fff"/></svg></a>
<a href="#" class="app running d-flex flex-column align-items-center" aria-label="Prism"><svg width="44" height="36" viewBox="0 0 44 36"><path d="M15 5h14q2 0 3 2l12 25H0L12 7q1-2 3-2z" fill="url(#prism)"/><path d="M21 5L13 32h14z" fill="#2f8ff2" opacity=".5"/></svg></a>
<a href="#" class="app running d-flex flex-column align-items-center" aria-label="Preview"><svg width="36" height="36" viewBox="0 0 36 36"><rect width="36" height="36" rx="8" fill="#fff"/><rect x="3" y="3" width="30" height="30" rx="5" fill="#a9c8f0"/><path d="M3 20h30v5H3z" fill="#274a80"/><path d="M3 25h30v3q0 5-5 5H8q-5 0-5-5z" fill="#d9c9ae"/><rect x="19" y="18" width="15" height="8" rx="2" fill="#151515"/><path d="M20 26h13l3 11H17z" fill="#b9bcc0"/><path d="M21 33l3-3v3l4-3v3" stroke="#333" fill="none"/></svg></a>
<span class="rule flex-shrink-0"></span>
<a href="#" class="app d-flex flex-column align-items-center" aria-label="Chrome window"><svg width="36" height="42" viewBox="0 0 36 42"><rect y="-3" width="36" height="43" fill="#fff"/><path d="M0-3h36v3H0z" fill="#e5ddba"/><path d="M1 4h33v10H1z" fill="#0f6b4d"/><path d="M4 20h28" stroke="#b678d8" stroke-width="2" stroke-dasharray="2 2"/><path d="M3 28h14M3 32h19M3 35h18" stroke="#a8b8c4"/><use href="#chrome" x="25" y="25" width="14" height="14"/></svg></a>
<a href="#" class="app d-flex flex-column align-items-center" aria-label="Screenshot window"><svg width="43" height="42" viewBox="0 0 43 42"><rect y="4" width="43" height="28" fill="#459b6c"/><path d="M0 4h43v4H0z" fill="#e8ebe8"/><path d="M15 9h13v20H15z" fill="#efebe0"/><path d="M17 12h9M17 21h9M17 25h9" stroke="#bdb9a8"/><rect x="28" y="25" width="15" height="14" rx="3" fill="#fff"/><rect x="30" y="27" width="11" height="10" rx="2" fill="#8fb0dc"/><path d="M35 32h6v4h-6z" fill="#333"/></svg></a>
<a href="#" class="app d-flex flex-column align-items-center" aria-label="Trash"><svg width="36" height="42" viewBox="0 0 36 42"><path d="M3 2l7-5 8 1 9-2 6 5-2 5H5z" fill="#f2f2f2"/><path d="M8 2l5-3 2 4zM19 1l5-2 1 5zM27 0l3 3-3 2z" fill="#6d5a50"/><path d="M14-1l5 3-4 2z" fill="#4a90b8"/><path d="M2 4q16 6 32 0l-4 31q-1 4-12 4T6 35z" fill="#d7d9da"/><path d="M8 8l3 28M27 8l-2 27M18 9v24" stroke="#bfc2c4"/><path d="M2 4q16 6 32 0" fill="none" stroke="#f5f5f5" stroke-width="1.500"/></svg></a>
</div>
</footer>
<script src="https://cdn.jsdelivr.net/npm/bootstrap@5.3.0/dist/js/bootstrap.bundle.min.js"></script>
</body>
</html>
